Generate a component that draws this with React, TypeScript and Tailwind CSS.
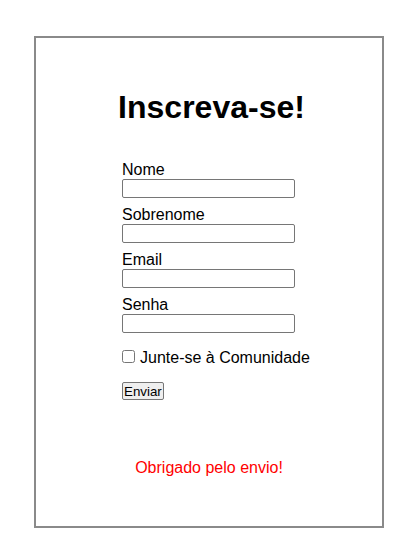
import React from "react";

const fields = ["Nome", "Sobrenome", "Email", "Senha"];

export default function App() {
  return (
    <div className="pt-[36px] pl-[34px] font-['Liberation_Sans',Arial,sans-serif] text-black">
      <div className="w-[350px] h-[492px] border-2 border-[#8a8a8a] flex flex-col">
        <h1 className="mt-[51px] pl-[5px] text-center text-[32px] font-bold leading-[37px]">
          Inscreva-se!
        </h1>

        {/* Form */}
        <form className="mt-[35px] pl-[86px] flex flex-col items-start">
          {fields.map((f) => (
            <div key={f} className="flex flex-col mb-[8px]">
              <label className="text-[16px] leading-[18px]">{f}</label>
              <input
                type={f === "Senha" ? "password" : "text"}
                className="w-[173px] h-[19px] border border-[#767676] rounded-[2px] bg-white"
              />
            </div>
          ))}

          <label className="mt-[8px] flex items-start gap-[5px] text-[16px] leading-[18px]">
            <input type="checkbox" className="mt-[1px] m-0 w-[13px] h-[13px]" />
            Junte-se à Comunidade
          </label>

          <button
            type="button"
            className="mt-[15px] h-[18px] px-[1px] border border-[#767676] rounded-[2px] bg-[#efefef] text-[13.33px] leading-[15px]"
          >
            Enviar
          </button>
        </form>

        <p className="mt-[59px] text-center text-[16px] leading-[18px] text-[#ff0000]">
          Obrigado pelo envio!
        </p>
      </div>
    </div>
  );
}
